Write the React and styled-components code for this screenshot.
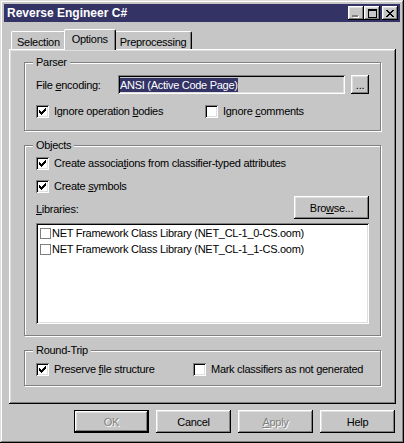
import React from "react";
import styled, { createGlobalStyle } from "styled-components";

const GlobalStyle = createGlobalStyle`
  html, body {
    margin: 0;
    padding: 0;
    background: #c6c6c6;
  }
  body {
    font-family: "Liberation Sans", Arial, sans-serif;
    font-size: 11px;
    letter-spacing: -0.28px;
    color: #000;
  }
`;

const raised = `
  box-shadow: inset -1px -1px 0 #000, inset 1px 1px 0 #fff,
    inset -2px -2px 0 #808080, inset 2px 2px 0 #dfdfdf;
`;
const sunken = `
  box-shadow: inset 1px 1px 0 #808080, inset -1px -1px 0 #fff,
    inset 2px 2px 0 #000, inset -2px -2px 0 #dfdfdf;
`;

const Window = styled.div`
  box-sizing: border-box;
  width: 404px;
  height: 443px;
  padding: 4px;
  background: #c6c6c6;
  box-shadow: inset -1px -1px 0 #000, inset 1px 1px 0 #dfdfdf,
    inset -2px -2px 0 #808080, inset 2px 2px 0 #fff;
  display: flex;
  flex-direction: column;
`;

const TitleBar = styled.div`
  height: 18px;
  background: #333366;
  display: flex;
  align-items: center;
  padding: 0 2px 0 3px;
`;
const Title = styled.div`
  flex: 1;
  color: #fff;
  font-weight: bold;
  font-size: 12px;
  letter-spacing: 0;
`;
const TitleButton = styled.div`
  width: 16px;
  height: 14px;
  box-sizing: border-box;
  background: #c6c6c6;
  ${raised}
  display: flex;
  align-items: center;
  justify-content: center;
  margin-left: ${(p) => p.$gap || 0}px;
  svg { display: block; }
`;

const Body = styled.div`
  flex: 1;
  display: flex;
  flex-direction: column;
  padding: 7px 4px 0 5px;
`;

const TabRow = styled.div`
  height: 20px;
  display: flex;
  align-items: flex-end;
  padding-left: 2px;
`;
const Tab = styled.div`
  position: relative;
  box-sizing: border-box;
  height: ${(p) => (p.$active ? 21 : 18)}px;
  margin: 0 ${(p) => (p.$active ? -2 : 0)}px ${(p) => (p.$active ? -1 : 0)}px;
  padding: ${(p) => (p.$active ? "2px 7px 0" : "3px 5px 0")};
  z-index: ${(p) => (p.$active ? 2 : 1)};
  background: #c6c6c6;
  border-top: 1px solid #fff;
  border-left: 1px solid #fff;
  border-right: 1px solid #000;
  border-radius: 2px 2px 0 0;
  box-shadow: inset -1px 0 0 #808080;
  line-height: 14px;
`;

const Panel = styled.div`
  box-sizing: border-box;
  height: 355px;
  padding: 13px 15px 0 15px;
  ${raised}
  display: flex;
  flex-direction: column;
  gap: 14px;
`;

const Group = styled.div`
  border: 1px solid #808080;
  box-shadow: 1px 1px 0 #fff, inset 1px 1px 0 #fff;
  padding: 0 11px ${(p) => p.$bottom}px;
  display: flex;
  flex-direction: column;
`;
const Legend = styled.div`
  align-self: flex-start;
  margin: -7px 0 0 -3px;
  padding: 0 3px;
  background: #c6c6c6;
  line-height: 13px;
`;

const Row = styled.div`
  display: flex;
  align-items: ${(p) => p.$align || "center"};
  margin-top: ${(p) => p.$top || 0}px;
`;
const FieldLabel = styled.div`
  width: 82px;
  flex: none;
`;
const LibLabel = styled.div`
  padding-bottom: 4px;
`;
const TextBox = styled.div`
  box-sizing: border-box;
  width: 228px;
  height: 19px;
  background: #c6c6c6;
  ${sunken}
  padding: 2px 2px;
  display: flex;
  align-items: center;
`;
const Selected = styled.span`
  background: #333366;
  color: #fff;
  line-height: 14px;
`;

const Button = styled.div`
  box-sizing: border-box;
  width: ${(p) => p.$w || 75}px;
  height: ${(p) => p.$h || 23}px;
  margin-left: ${(p) => p.$ml || 0}px;
  background: #c6c6c6;
  ${raised}
  display: flex;
  align-items: center;
  justify-content: center;
  color: ${(p) => (p.$disabled ? "#808080" : "#000")};
  text-shadow: ${(p) => (p.$disabled ? "1px 1px 0 #fff" : "none")};
  ${(p) =>
    p.$default &&
    `
    box-shadow: inset 0 0 0 1px #000, inset -2px -2px 0 #000, inset 2px 2px 0 #fff,
      inset -3px -3px 0 #808080, inset 3px 3px 0 #dfdfdf;
  `}
`;

const Check = styled.label`
  display: flex;
  align-items: center;
  gap: 5px;
  width: ${(p) => (p.$w ? p.$w + "px" : "auto")};
  flex: none;
  line-height: 13px;
`;
const Box = styled.span`
  box-sizing: border-box;
  width: 13px;
  height: 13px;
  flex: none;
  background: #fff;
  ${sunken}
  display: flex;
  align-items: center;
  justify-content: center;
  svg { display: block; }
`;

const Spacer = styled.div`
  flex: 1;
`;

const ListBox = styled.div`
  box-sizing: border-box;
  height: 101px;
  margin-top: 4px;
  background: #fff;
  ${sunken}
  padding: 2px 2px;
`;
const ListItem = styled.div`
  height: 16px;
  display: flex;
  align-items: center;
  padding-left: 2px;
  gap: 1px;
`;
const FlatBox = styled.span`
  box-sizing: border-box;
  width: 11px;
  height: 11px;
  border: 1px solid #808080;
  background: #fff;
`;

const ButtonRow = styled.div`
  display: flex;
  justify-content: flex-end;
  padding-right: 1px;
  margin-top: 6px;
`;

const CheckMark = () => (
  <svg width="7" height="7" viewBox="0 0 7 7" shapeRendering="crispEdges">
    <path
      fill="#000"
      d="M6 0h1v3h-1v1h-1v1h-1v1h-1v1h-1v-1h-1v-1h-1v-3h1v1h1v1h1v-1h1v-1h1z"
    />
  </svg>
);

const Checkbox = ({ checked, w, children }) => (
  <Check $w={w}>
    <Box>{checked && <CheckMark />}</Box>
    <span>{children}</span>
  </Check>
);

export default function App() {
  return (
    <>
      <GlobalStyle />
      <Window>
        <TitleBar>
          <Title>Reverse Engineer C#</Title>
          <TitleButton>
            <svg width="8" height="9" viewBox="0 0 8 9" shapeRendering="crispEdges">
              <rect x="0" y="6" width="6" height="2" fill="#808080" />
              <rect x="1" y="8" width="6" height="1" fill="#fff" />
              <rect x="6" y="7" width="1" height="2" fill="#fff" />
            </svg>
          </TitleButton>
          <TitleButton>
            <svg width="9" height="9" viewBox="0 0 9 9" shapeRendering="crispEdges">
              <path fill="#000" d="M0 0h9v9h-9zM1 2v6h7v-6z" />
            </svg>
          </TitleButton>
          <TitleButton $gap={2}>
            <svg width="8" height="7" viewBox="0 0 8 7" shapeRendering="crispEdges">
              <path
                fill="#000"
                d="M0 0h2v1h1v1h2v-1h1v-1h2v1h-1v1h-1v1h-1v1h1v1h1v1h1v1h-2v-1h-1v-1h-2v1h-1v1h-2v-1h1v-1h1v-1h1v-1h-1v-1h-1v-1h-1z"
              />
            </svg>
          </TitleButton>
        </TitleBar>

        <Body>
          <TabRow>
            <Tab>Selection</Tab>
            <Tab $active>Options</Tab>
            <Tab>Preprocessing</Tab>
          </TabRow>

          <Panel>
            <Group $bottom={12}>
              <Legend>Parser</Legend>
              <Row $top={6}>
                <FieldLabel>
                  File <u>e</u>ncoding:
                </FieldLabel>
                <TextBox>
                  <Selected>ANSI (Active Code Page)</Selected>
                </TextBox>
                <Button $w={18} $h={19} $ml={6}>
                  ...
                </Button>
              </Row>
              <Row $top={11}>
                <Checkbox checked w={169}>
                  Ignore operation <u>b</u>odies
                </Checkbox>
                <Checkbox>
                  Ignore <u>c</u>omments
                </Checkbox>
              </Row>
            </Group>

            <Group $bottom={11}>
              <Legend>Objects</Legend>
              <Row $top={5}>
                <Checkbox checked>
                  Create associa<u>t</u>ions from classifier-typed attributes
                </Checkbox>
              </Row>
              <Row $top={10}>
                <Checkbox checked>
                  Create <u>s</u>ymbols
                </Checkbox>
              </Row>
              <Row $top={3} $align="flex-end">
                <LibLabel>
                  <u>L</u>ibraries:
                </LibLabel>
                <Spacer />
                <Button>
                  Bro<u>w</u>se...
                </Button>
              </Row>
              <ListBox>
                <ListItem>
                  <FlatBox />
                  NET Framework Class Library (NET_CL-1_0-CS.oom)
                </ListItem>
                <ListItem>
                  <FlatBox />
                  NET Framework Class Library (NET_CL-1_1-CS.oom)
                </ListItem>
              </ListBox>
            </Group>

            <Group $bottom={9}>
              <Legend>Round-Trip</Legend>
              <Row $top={6}>
                <Checkbox checked w={157}>
                  Preserve <u>f</u>ile structure
                </Checkbox>
                <Checkbox>
                  Mark classifiers as not <u>g</u>enerated
                </Checkbox>
              </Row>
            </Group>
          </Panel>

          <ButtonRow>
            <Button $default $disabled>
              OK
            </Button>
            <Button $ml={7}>Cancel</Button>
            <Button $ml={7} $disabled>
              <span>
                <u>A</u>pply
              </span>
            </Button>
            <Button $ml={7}>Help</Button>
          </ButtonRow>
        </Body>
      </Window>
    </>
  );
}
